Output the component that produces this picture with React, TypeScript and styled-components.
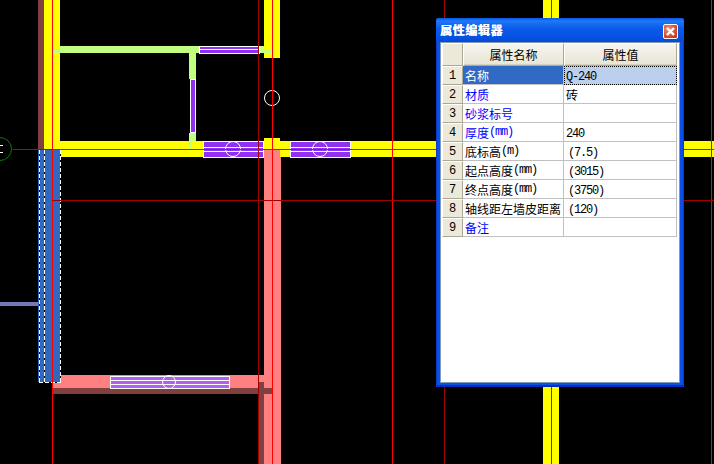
import { createGlobalStyle, styled } from "styled-components";

type Row = {
  label: string;
  unit?: string;
  value?: string;
  required?: boolean;
};

const rows: Row[] = [
  { label: "名称", value: "Q-240", required: true },
  { label: "材质", value: "砖", required: true },
  { label: "砂浆标号", required: true },
  { label: "厚度", unit: "(mm)", value: "240", required: true },
  { label: "底标高", unit: "(m)", value: "(7.5)" },
  { label: "起点高度", unit: "(mm)", value: "(3015)" },
  { label: "终点高度", unit: "(mm)", value: "(3750)" },
  { label: "轴线距左墙皮距离", value: "(120)" },
  { label: "备注", required: true },
];

const YELLOW = "#ffff00";
const GREEN = "#c0ff80";
const PINK = "#ff8080";
const BROWN = "#804040";
const PURPLE = "#9030f0";
const RED = "#ff0000";
const DARK_RED = "#a00000";

// window with centre bars, used on the walls
const WallWindow = ({ x, y, w, h, fill, lines }: { x: number; y: number; w: number; h: number; fill: string; lines: number[] }) => (
  <g>
    <rect x={x} y={y} width={w} height={h} fill="#fff" />
    <rect x={x + 1} y={y + 1} width={w - 2} height={h - 2} fill={fill} />
    {lines.map((l) => (
      <rect key={l} x={x} y={l} width={w} height={1} fill="#fff" />
    ))}
  </g>
);

const Marker = ({ cx, cy, r }: { cx: number; cy: number; r: number }) => (
  <circle cx={cx} cy={cy} r={r} fill="none" stroke="#fff" strokeWidth={1} />
);

const Drawing = () => (
  <Plan width={714} height={464} viewBox="0 0 714 464" shapeRendering="crispEdges">
    {/* left walls */}
    <rect x={38} y={0} width={6} height={150} fill={BROWN} />
    <rect x={44} y={0} width={16} height={150} fill={YELLOW} />
    <rect x={60} y={141} width={144} height={8} fill={YELLOW} />
    <rect x={61} y={149} width={143} height={8} fill={YELLOW} />
    <rect x={264} y={0} width={16} height={58} fill={YELLOW} />
    <rect x={543} y={0} width={16} height={464} fill={YELLOW} />

    {/* middle wall */}
    <rect x={264} y={138} width={16} height={12} fill={YELLOW} />
    <rect x={264} y={150} width={17} height={314} fill={PINK} />
    <rect x={280} y={141} width={11} height={16} fill={YELLOW} />
    <rect x={351} y={141} width={363} height={16} fill={YELLOW} />

    {/* partition room */}
    <rect x={60} y={46} width={139} height={7} fill={GREEN} />
    <rect x={53} y={49} width={7} height={4} fill={GREEN} />
    <rect x={260} y={46} width={4} height={7} fill={GREEN} />
    <rect x={264} y={49} width={8} height={4} fill={GREEN} />
    <rect x={189} y={53} width={7} height={26} fill={GREEN} />
    <rect x={189} y={133} width={7} height={8} fill={GREEN} />
    <rect x={189} y={141} width={3} height={8} fill={GREEN} />

    <WallWindow x={199} y={46} w={60} h={8} fill={PURPLE} lines={[49]} />
    <rect x={259} y={46} width={1} height={8} fill="#fff" />
    <rect x={190} y={79} width={6} height={54} fill="#fff" />
    <rect x={191} y={80} width={4} height={52} fill={PURPLE} />

    <WallWindow x={203} y={141} w={61} h={17} fill={PURPLE} lines={[147, 151]} />
    <WallWindow x={290} y={141} w={61} h={17} fill={PURPLE} lines={[147, 151]} />
    <g shapeRendering="auto">
      <Marker cx={233} cy={149} r={7.5} />
      <Marker cx={320} cy={149} r={7.5} />
      <Marker cx={272} cy={98} r={7.5} />
    </g>

    {/* bottom wall */}
    <rect x={61} y={375} width={203} height={13} fill={PINK} />
    <rect x={53} y={382} width={8} height={6} fill={PINK} />
    <rect x={53} y={388} width={219} height={6} fill={BROWN} />
    <rect x={258} y={382} width={6} height={82} fill={BROWN} />
    <rect x={110} y={376} width={120} height={13} fill="#fff" />
    <rect x={111} y={377} width={118} height={11} fill="#b060f0" />
    <rect x={111} y={380} width={118} height={1} fill="#fff" />
    <rect x={111} y={384} width={118} height={1} fill="#fff" />
    <g shapeRendering="auto">
      <Marker cx={169} cy={382} r={6.5} />
    </g>

    {/* selected wall */}
    <rect x={38} y={150} width={22} height={232} fill="#3068c0" />
    <path d="M39.5 150V382M44.5 150V382M60.5 150V383M39 382.5H61" stroke="#000" fill="none" />
    <path d="M39.5 150V382M44.5 150V382M60.5 150V383M39 382.5H61" stroke="#fff" strokeDasharray="4 2" fill="none" />

    <rect x={0} y={302} width={38} height={4} fill="#7878b8" />

    {/* axis lines */}
    <rect x={52} y={0} width={1} height={464} fill={RED} />
    <rect x={272} y={0} width={1} height={464} fill={RED} />
    <rect x={392} y={0} width={1} height={464} fill={RED} />
    <rect x={551} y={0} width={1} height={464} fill={RED} />
    <rect x={711} y={0} width={1} height={464} fill={RED} />
    <rect x={258} y={0} width={1} height={464} fill={DARK_RED} />
    <rect x={444} y={0} width={1} height={464} fill={DARK_RED} />
    <rect x={52} y={200} width={662} height={1} fill={DARK_RED} />
    <rect x={52} y={149} width={662} height={1} fill={RED} />
    <rect x={13} y={149} width={39} height={1} fill="#006000" />

    {/* axis bubble */}
    <g shapeRendering="auto">
      <circle cx={0} cy={149} r={11.5} fill="none" stroke="#008000" strokeWidth={1} />
    </g>
    <path d="M3 145.5H0M0 152.5H3" stroke="#fff" strokeWidth={1} fill="none" />
  </Plan>
);

const CloseIcon = () => (
  <svg width="9" height="9" viewBox="0 0 9 9">
    <path d="M1 1L8 8M8 1L1 8" stroke="#fff" strokeWidth="2.4" fill="none" />
  </svg>
);

const PropertyEditor = () => (
  <Dialog>
    <TitleBar>
      <TitleText>属性编辑器</TitleText>
      <CloseButton>
        <CloseIcon />
      </CloseButton>
    </TitleBar>
    <Client>
      <Grid>
        <Corner />
        <ColHead>属性名称</ColHead>
        <ColHead>属性值</ColHead>
        {rows.map((row, i) => (
          <GridRow key={row.label}>
            <RowHead>{i + 1}</RowHead>
            <NameCell $required={row.required} $selected={i === 0}>
              {row.label}
              {row.unit && <Latin>{row.unit}</Latin>}
            </NameCell>
            <ValueCell $selected={i === 0} $derived={!!row.value && row.value.startsWith("(")}>
              {row.value === "砖" ? row.value : <ValueText>{row.value}</ValueText>}
            </ValueCell>
          </GridRow>
        ))}
      </Grid>
    </Client>
  </Dialog>
);

export default function App() {
  return (
    <>
      <GlobalStyle />
      <Canvas>
        <Drawing />
        <PropertyEditor />
      </Canvas>
    </>
  );
}

const GlobalStyle = createGlobalStyle`
  html, body {
    margin: 0;
    padding: 0;
    background: #000;
  }
`;

const Canvas = styled.div`
  position: relative;
  width: 714px;
  height: 464px;
  overflow: hidden;
  background: #000;
`;

const Plan = styled.svg`
  display: block;
`;

const Dialog = styled.div`
  position: absolute;
  left: 436px;
  top: 18px;
  width: 248px;
  height: 369px;
  box-sizing: border-box;
  display: flex;
  flex-direction: column;
  padding: 0 4px 4px;
  background: #0a50e8;
  border-radius: 3px 3px 0 0;
  box-shadow: inset 1px 0 0 #0a3cc8, inset -1px 0 0 #0a3cc8, inset 0 -2px 0 #0030b8;
  font-family: "Noto Sans CJK SC", "Liberation Sans", sans-serif;
  font-size: 12px;
`;

const TitleBar = styled.div`
  display: flex;
  align-items: center;
  justify-content: space-between;
  height: 24px;
  flex-shrink: 0;
  margin: 0 -4px;
  padding: 0 6px 0 4px;
  border-radius: 3px 3px 0 0;
  background: linear-gradient(#0a56e8 0%, #1e78f8 12%, #0a5ae8 45%, #0652e4 80%, #0a48d0 100%);
`;

const TitleText = styled.span`
  color: #fff;
  font-size: 12px;
  font-weight: 700;
  line-height: 24px;
  letter-spacing: 0.6px;
  text-shadow: 0.4px 0 0 #fff;
`;

const CloseButton = styled.div`
  display: flex;
  align-items: center;
  justify-content: center;
  width: 13px;
  height: 13px;
  margin-top: 3px;
  border: 1px solid #fff;
  border-radius: 2px;
  background: radial-gradient(circle at 35% 30%, #f09070, #d84020 70%, #c03010);
`;

const Client = styled.div`
  flex: 1;
  background: #fff;
  border: 1px solid #7f9db9;
  padding: 0 2px 0 1px;
  min-height: 0;
`;

const Grid = styled.div`
  display: grid;
  grid-template-columns: 21px 101px 113px;
  grid-template-rows: 23px repeat(9, 19px);
  width: max-content;
`;

const GridRow = styled.div`
  display: contents;
`;

const HeadBase = styled.div`
  box-sizing: border-box;
  display: flex;
  align-items: center;
  justify-content: center;
  background: #ece9d8;
  color: #000;
  border-top: 1px solid #fff;
  border-left: 1px solid #fff;
  border-right: 1px solid #aca899;
  border-bottom: 1px solid #aca899;
`;

const Corner = styled(HeadBase)``;

const ColHead = styled(HeadBase)`
  font-size: 12px;
  background: linear-gradient(#f6f5ee, #e8e5d6);
  box-shadow: inset 0 -1px 0 #d6d2c2;
`;

const RowHead = styled(HeadBase)`
  font-family: "Liberation Mono", monospace;
  font-size: 12px;
`;

const Cell = styled.div`
  box-sizing: border-box;
  display: flex;
  align-items: center;
  white-space: nowrap;
  overflow: hidden;
  border-right: 1px solid #c0c0c0;
  border-bottom: 1px solid #c0c0c0;
  color: #000;
`;

const NameCell = styled(Cell)<{ $required?: boolean; $selected?: boolean }>`
  padding-left: 2px;
  color: ${(p) => (p.$selected ? "#fff" : p.$required ? "#0000ff" : "#000")};
  background: ${(p) => (p.$selected ? "#316ac5" : "#fff")};
`;

const ValueCell = styled(Cell)<{ $selected?: boolean; $derived?: boolean }>`
  padding-left: ${(p) => (p.$derived ? "4px" : "2px")};
  background: ${(p) => (p.$selected ? "#bcd0ee" : "#fff")};
  outline: ${(p) => (p.$selected ? "1px dotted #000" : "none")};
  outline-offset: -1px;
`;

const Latin = styled.span`
  font-family: "Liberation Mono", monospace;
  font-size: 12px;
  letter-spacing: -1.2px;
`;

const ValueText = styled(Latin)`
  padding-top: 3px;
`;
